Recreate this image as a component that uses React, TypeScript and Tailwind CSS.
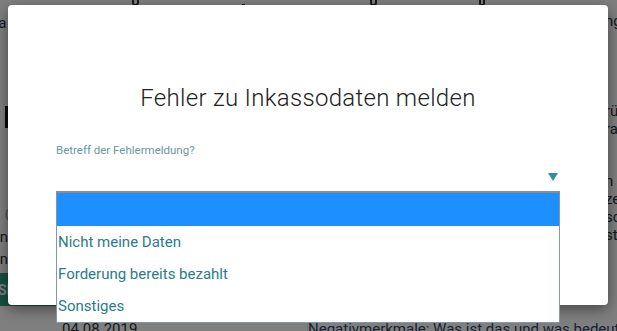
import React from 'react';

const options = ['Nicht meine Daten', 'Forderung bereits bezahlt', 'Sonstiges'];

const BackgroundPage: React.FC = () => (
    <div className="flex h-full w-full flex-col bg-white text-[#2a3340]" style={{ fontFamily: 'Roboto, "Noto Sans", sans-serif' }}>
        <div className="flex h-[6px] items-end px-[132px]">
            <div className="h-[6px] w-[12px] rounded-b-sm border-2 border-t-0 border-[#333]" />
            <div className="ml-[103px] h-[6px] w-[8px] border-b-2 border-[#333]" />
            <div className="ml-[125px] h-[6px] w-[14px] rounded-b-full border-2 border-t-0 border-[#333]" />
            <div className="ml-[102px] h-[6px] w-[10px] rounded-b-sm border-2 border-t-0 border-[#333]" />
        </div>
        <div className="flex flex-1 overflow-hidden">
            <div className="flex w-[56px] shrink-0 flex-col items-start text-[15px] leading-[18px]">
                <span className="mt-[8px] -ml-[27px] whitespace-nowrap">Kasa</span>
                <div className="ml-[5px] mt-[74px] h-[22px] w-[3px] bg-[#111]" />
                <span className="mt-[76px] text-[18px] leading-[22px] text-[#aaa]">&nbsp;C</span>
                <span className="-ml-[4px] mt-[2px]">in</span>
                <span className="-ml-[4px] mt-[4px]">in</span>
                <div className="mt-[5px] flex h-[33px] w-[56px] shrink-0 items-center bg-[#2f9e82] text-[14px] font-bold text-white">
                    <span className="-ml-[2px]">SI</span>
                </div>
            </div>
            <div className="flex flex-1 flex-col justify-end">
                <div className="-mb-[6px] flex h-[26px] items-end">
                    <div className="w-[236px] shrink-0 whitespace-nowrap pl-[6px] text-[15px] leading-[16px] text-[#333]">04.08.2019</div>
                    <div className="h-[26px] w-[16px] shrink-0 border-r border-[#e8e8e8]" />
                    <div className="whitespace-nowrap text-[15px] leading-[16px] text-[#334466]">Negativmerkmale: Was ist das und was bedeutet das</div>
                </div>
            </div>
        </div>
    </div>
);

const App: React.FC = () => {
    return (
        <div className="relative h-[331px] w-[617px] overflow-hidden bg-white">
            <BackgroundPage />
            <div className="absolute right-0 top-[12px] flex w-[12px] flex-col text-[15px] leading-[18px] text-[#2a3340]" style={{ fontFamily: 'Roboto, sans-serif' }}>
                <span>ng</span>
                <span className="mt-[72px]">rü</span>
                <span>ra</span>
                <span className="mt-[34px]">n</span>
                <span>ze</span>
                <span>sc</span>
                <span>st</span>
            </div>
            <div className="absolute inset-0 bg-black/50" />

            <div
                className="absolute left-[8px] top-[5px] h-[300px] w-[600px] rounded-[4px] bg-white px-[48px] pt-[78px] shadow-[0_4px_14px_rgba(0,0,0,0.45)]"
                style={{ fontFamily: 'Roboto, "Noto Sans", sans-serif' }}
            >
                <h2 className="text-center text-[24px] font-light leading-[30px] tracking-[0.3px] text-[#222]">
                    Fehler zu Inkassodaten melden
                </h2>
                <label className="mt-[30px] block text-[11.5px] leading-[14px] text-[#6c98a0]">Betreff der Fehlermeldung?</label>
                <div className="mt-[6px] flex h-[28px] items-center justify-end pr-[2px]">
                    <svg width="10" height="8" viewBox="0 0 10 8">
                        <path d="M0 0 L10 0 L5 8 Z" fill="#2a9199" />
                    </svg>
                </div>
            </div>

            <div
                className="absolute left-[56px] top-[191px] w-[504px] border border-t-2 border-[#7f98b2] border-t-[#8c8c8c] bg-white"
                style={{ fontFamily: 'Roboto, "Noto Sans", sans-serif' }}
            >
                <div className="h-[33px] bg-[#1e8fff]" />
                {options.map(o => (
                    <div key={o} className="flex h-[32px] items-center pl-[1px] pt-[1px] text-[15px] text-[#2b7b8b]">
                        {o}
                    </div>
                ))}
            </div>
        </div>
    );
};

export default App;
